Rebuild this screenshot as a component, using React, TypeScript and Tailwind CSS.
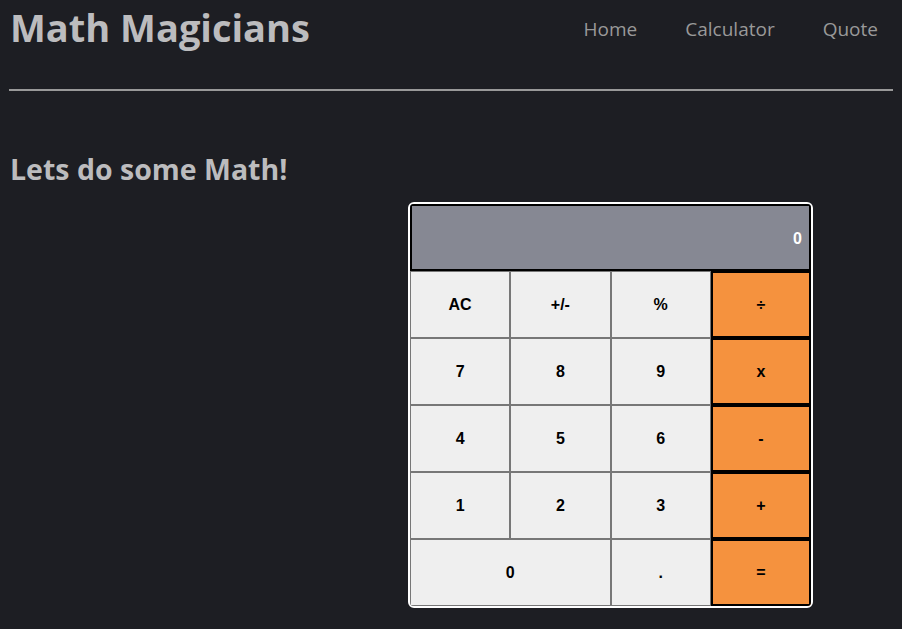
const buttons: { label: string; kind: "num" | "op"; wide?: boolean }[] = [
  { label: "AC", kind: "num" },
  { label: "+/-", kind: "num" },
  { label: "%", kind: "num" },
  { label: "÷", kind: "op" },
  { label: "7", kind: "num" },
  { label: "8", kind: "num" },
  { label: "9", kind: "num" },
  { label: "x", kind: "op" },
  { label: "4", kind: "num" },
  { label: "5", kind: "num" },
  { label: "6", kind: "num" },
  { label: "-", kind: "op" },
  { label: "1", kind: "num" },
  { label: "2", kind: "num" },
  { label: "3", kind: "num" },
  { label: "+", kind: "op" },
  { label: "0", kind: "num", wide: true },
  { label: ".", kind: "num" },
  { label: "=", kind: "op" },
];

function Calculator() {
  return (
    <div className="w-[405px] border-2 border-white rounded-md overflow-hidden font-['Liberation_Sans',Arial,sans-serif]">
      <div className="h-[67px] bg-[#868893] border-2 border-black flex items-center justify-end pr-[7px] pt-[2px] text-white font-bold text-base">
        0
      </div>
      <div className="grid grid-cols-4">
        {buttons.map((b) => (
          <button
            key={b.label}
            type="button"
            className={
              b.kind === "op"
                ? "h-[67px] bg-[#f5923e] border-2 border-black text-black font-bold text-base"
                : b.wide
                  ? "col-span-2 h-[67px] bg-[#efefef] border border-[#777] text-black font-bold text-base"
                  : "h-[67px] bg-[#efefef] border border-[#777] text-black font-bold text-base"
            }
          >
            {b.label}
          </button>
        ))}
      </div>
    </div>
  );
}

export default function App() {
  return (
    <div className="min-h-[629px] bg-[#1d1e23] font-['Open_Sans',sans-serif] px-[9px]">
      <header className="flex items-start justify-between border-b-2 border-[#999] h-[91px]">
        <h1 className="text-[#bcbcbe] text-[38px] font-bold leading-[54px] pl-[1px]">Math Magicians</h1>
        <nav className="flex gap-12 pr-[15px] pt-[15px]">
          <a className="text-[#999] text-[19px]">Home</a>
          <a className="text-[#999] text-[19px]">Calculator</a>
          <a className="text-[#999] text-[19px]">Quote</a>
        </nav>
      </header>
      <main className="pt-[58px]">
        <h2 className="text-[#bcbcbe] text-[28.5px] font-bold leading-[40px] pl-[1px]">Lets do some Math!</h2>
        <div className="ml-[399px] mt-[13px]">
          <Calculator />
        </div>
      </main>
    </div>
  );
}
